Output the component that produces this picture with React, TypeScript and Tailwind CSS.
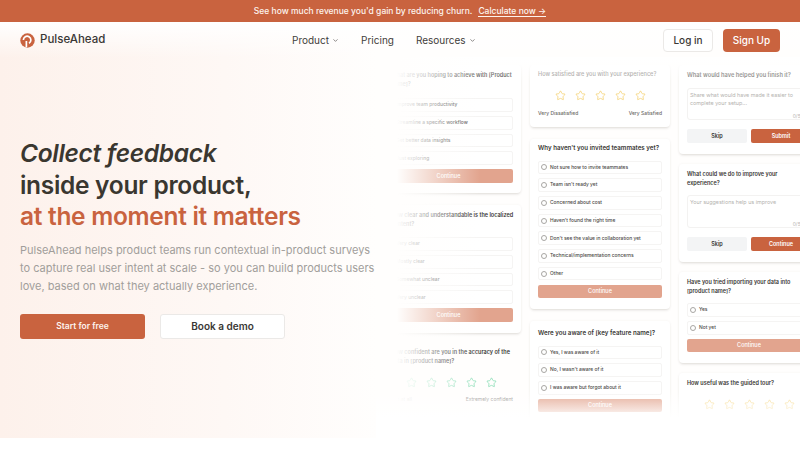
import type { ReactNode } from "react";
import { ChevronDown, Star } from "lucide-react";

const font = "font-['Inter','Liberation_Sans',sans-serif]";

function Logo() {
  return (
    <svg viewBox="0 0 16 16" className="h-[15px] w-[15px]">
      <circle cx="8" cy="8" r="7.7" fill="#c9633f" />
      <path d="M6.8 15.2V8.6M3.6 7.4a4 4 0 1 1 6 3.5" fill="none" stroke="#fff" strokeWidth="1.8" />
    </svg>
  );
}

function Option({ label }: { label: string }) {
  return (
    <div className="flex h-[13.5px] items-center gap-[3px] rounded-[2px] border border-[#f5f4f3] bg-white px-[2px] text-[4.9px] font-medium text-[#4a4845]">
      <span className="h-[6px] w-[6px] rounded-full border-[0.6px] border-[#a8a6a3]" />
      {label}
    </div>
  );
}

function Continue() {
  return (
    <div className="flex h-[13.5px] items-center justify-center rounded-[2px] bg-[#e2a48e] text-[5.5px] font-medium text-white">
      Continue
    </div>
  );
}

function Stars({ color }: { color: string }) {
  return (
    <div className="flex justify-center gap-[9px]">
      {[0, 1, 2, 3, 4].map((i) => (
        <Star key={i} className="h-[11px] w-[11px]" color={color} strokeWidth={1.6} />
      ))}
    </div>
  );
}

function Card({ children, className = "" }: { children: ReactNode; className?: string }) {
  return (
    <div className={`rounded-[4px] bg-white px-[8px] shadow-[0_2px_3px_-1px_rgba(60,50,40,0.16),0_0_3px_rgba(60,50,40,0.05)] ${className}`}>
      {children}
    </div>
  );
}

function Question({ children, className = "text-[6.2px] font-semibold text-[#3a3835]" }: { children: ReactNode; className?: string }) {
  return <p className={`leading-[8.7px] ${className}`}>{children}</p>;
}

const smallQ = "text-[5.5px] font-semibold text-[#3a3835]";
const mutedQ = "text-[5.6px] font-medium text-[#8f8d8a]";

function TextBox({ text, className }: { text: string; className: string }) {
  return (
    <div className={`relative mt-[8px] rounded-[3px] border border-[#f3f2f1] p-[2px] text-[5.4px] leading-[8px] text-[#b5b3b0] ${className}`}>
      {text}
      <span className="absolute right-[3px] bottom-[-1px] text-[5px]">0/500</span>
    </div>
  );
}

function TextActions({ label }: { label: string }) {
  return (
    <div className="mt-[9px] flex gap-[4px] text-[5.5px] font-semibold">
      <div className="flex h-[14px] flex-1 items-center justify-center rounded-[2px] bg-[#f3f4f5] text-[#3a3835]">Skip</div>
      <div className="flex h-[14px] flex-1 items-center justify-center rounded-[2px] bg-[#c9633f] text-white">{label}</div>
    </div>
  );
}

function SurveyWall() {
  return (
    <div className="absolute top-[65px] left-[376px] flex h-[373px] w-[440px] gap-[9px] overflow-hidden">
      {/* col 1 */}
      <div className="flex w-[145px] shrink-0 flex-col gap-[12px]">
        <Card className="h-[128px] pt-[6px]">
          <div className="-mr-[3px] pl-[7px]">
            <Question className={smallQ}>What are you hoping to achieve with [Product name]?</Question>
          </div>
          <div className="mt-[10px] flex flex-col gap-[4.2px]">
            <Option label="Improve team productivity" />
            <Option label="Streamline a specific workflow" />
            <Option label="Get better data insights" />
            <Option label="Just exploring" />
            <Continue />
          </div>
        </Card>
        <Card className="h-[128px] pt-[6px]">
          <div className="-mr-[3px] pl-[7px]">
            <Question className={smallQ}>How clear and understandable is the localized content?</Question>
          </div>
          <div className="mt-[9px] flex flex-col gap-[4.2px]">
            <Option label="Very clear" />
            <Option label="Mostly clear" />
            <Option label="Somewhat unclear" />
            <Option label="Very unclear" />
            <Continue />
          </div>
        </Card>
        <div className="pt-[3px] pr-[8px] pl-[15px]">
          <Question className={smallQ}>How confident are you in the accuracy of the data in [product name]?</Question>
          <div className="mt-[12px] pr-[2px]">
            <Stars color="#7fdcb0" />
          </div>
          <div className="mt-[8px] flex justify-between text-[5px] text-[#8f8d8a]">
            <span>Not at all</span>
            <span>Extremely confident</span>
          </div>
        </div>
      </div>
      {/* col 2 */}
      <div className="flex w-[140px] shrink-0 flex-col gap-[12px]">
        <Card className="h-[62px] pt-[5px]">
          <Question className={mutedQ}>How satisfied are you with your experience?</Question>
          <div className="mt-[11px]">
            <Stars color="#f4cf6b" />
          </div>
          <div className="mt-[9px] flex justify-between text-[5px] font-medium text-[#6b6966]">
            <span>Very Dissatisfied</span>
            <span>Very Satisfied</span>
          </div>
        </Card>
        <Card className="h-[170px] pt-[5px]">
          <Question>Why haven't you invited teammates yet?</Question>
          <div className="mt-[8px] flex flex-col gap-[4.2px]">
            <Option label="Not sure how to invite teammates" />
            <Option label="Team isn't ready yet" />
            <Option label="Concerned about cost" />
            <Option label="Haven't found the right time" />
            <Option label="Don't see the value in collaboration yet" />
            <Option label="Technical/implementation concerns" />
            <Option label="Other" />
            <Continue />
          </div>
        </Card>
        <Card className="pt-[8px] pb-[8px]">
          <Question>Were you aware of [key feature name]?</Question>
          <div className="mt-[8px] flex flex-col gap-[4.2px]">
            <Option label="Yes, I was aware of it" />
            <Option label="No, I wasn't aware of it" />
            <Option label="I was aware but forgot about it" />
            <Continue />
          </div>
        </Card>
      </div>
      {/* col 3 */}
      <div className="flex w-[140px] shrink-0 flex-col gap-[10px]">
        <Card className="h-[89px] pt-[6px]">
          <Question className="text-[5.7px] font-semibold text-[#6f6d6a]">What would have helped you finish it?</Question>
          <TextBox className="h-[32px]" text="Share what would have made it easier to complete your setup..." />
          <TextActions label="Submit" />
        </Card>
        <Card className="h-[98px] pt-[6px]">
          <Question className={smallQ}>What could we do to improve your experience?</Question>
          <TextBox className="h-[33px]" text="Your suggestions help us improve" />
          <TextActions label="Continue" />
        </Card>
        <Card className="h-[91px] pt-[6px]">
          <Question className={smallQ}>Have you tried importing your data into [product name]?</Question>
          <div className="mt-[8px] flex flex-col gap-[4.2px]">
            <Option label="Yes" />
            <Option label="Not yet" />
            <Continue />
          </div>
        </Card>
        <Card className="pt-[6px] pb-[10px]">
          <Question className={smallQ}>How useful was the guided tour?</Question>
          <div className="mt-[11px]">
            <Stars color="#f4cf6b" />
          </div>
        </Card>
      </div>
    </div>
  );
}

export default function App() {
  return (
    <div className={`relative h-[450px] w-[800px] overflow-hidden bg-white ${font}`}>
      <div className="flex h-[22px] items-center justify-center gap-[5px] bg-[#c9633f] text-[8.5px] font-medium text-[#fdf3ee]">
        See how much revenue you'd gain by reducing churn.
        <span className="ml-[1px] border-b border-[#fdf3ee] leading-[10px]">Calculate now →</span>
      </div>

      <div className="relative h-[416px] bg-gradient-to-r from-[#fdf1eb] via-[#fef8f5] via-[28%] to-[#fffefd] to-[47%]">
        <div className="absolute inset-x-0 top-0 h-[36px] bg-gradient-to-b from-white to-transparent" />
        <nav className="relative flex h-[36px] items-center px-[20px]">
          <div className="flex w-[272px] items-center gap-[5px] text-[11.5px] font-medium text-[#3a3835]">
            <Logo />
            PulseAhead
          </div>
          <div className="mr-auto flex items-center gap-[22px] text-[10px] text-[#3f3d3a]">
            <span className="flex items-center gap-[3px]">
              Product <ChevronDown className="h-[7px] w-[7px]" />
            </span>
            <span>Pricing</span>
            <span className="flex items-center gap-[3px]">
              Resources <ChevronDown className="h-[7px] w-[7px]" />
            </span>
          </div>
          <div className="flex justify-end gap-[10px] text-[10px] font-medium">
            <span className="flex h-[23px] w-[50px] items-center justify-center rounded-[4px] border border-[#ebe9e7] bg-white text-[#3a3835]">
              Log in
            </span>
            <span className="flex h-[23px] w-[57px] items-center justify-center rounded-[4px] bg-[#c9633f] text-white">
              Sign Up
            </span>
          </div>
        </nav>

        <div className="relative w-[380px] pt-[80px] pl-[20px]">
          <h1 className="text-[24.5px] leading-[31.5px] font-semibold tracking-[-0.3px] text-[#3a3730]">
            <em>Collect feedback</em>
            <br />
            inside your product,
            <br />
            <span className="text-[#c9633f]">at the moment it matters</span>
          </h1>
          <p className="mt-[8.5px] w-[358px] text-[11px] leading-[18px] text-[#a19e9b]">
            PulseAhead helps product teams run contextual in-product surveys to capture real user intent at scale - so you can build products users love, based on what they actually experience.
          </p>
          <div className="mt-[19px] flex gap-[15px] font-semibold">
            <span className="flex h-[25px] w-[125px] items-center justify-center rounded-[3px] bg-[#c9633f] text-[8.5px] text-[#fdf3ee]">
              Start for free
            </span>
            <span className="flex h-[25px] w-[125px] items-center justify-center rounded-[3px] border border-[#ebe9e7] bg-white text-[10px] text-[#3a3835]">
              Book a demo
            </span>
          </div>
        </div>
      </div>

      <SurveyWall />
      {/* fades over the wall */}
      <div className="absolute top-[57px] left-[376px] h-[25px] w-[424px] bg-gradient-to-b from-white to-transparent" />
      <div className="absolute top-[57px] left-[376px] h-[381px] w-[104px] bg-gradient-to-r from-[#fffefd] from-20% to-transparent" />
      <div className="absolute top-[390px] left-[376px] h-[48px] w-[424px] bg-gradient-to-b from-transparent to-white to-60%" />
    </div>
  );
}
